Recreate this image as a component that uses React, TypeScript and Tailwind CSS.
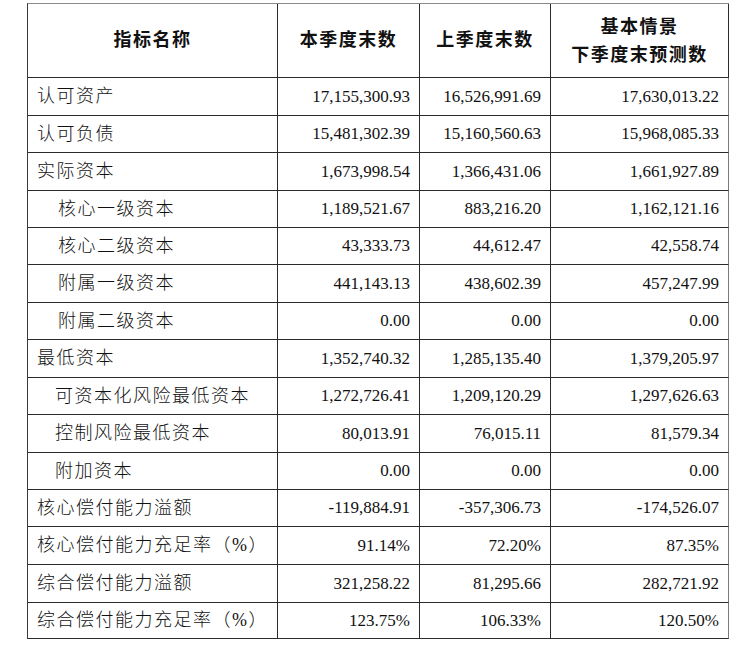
const ROWS: { label: string; indent?: string; cur: string; prev: string; next: string; h: string }[] = [
  { label: "认可资产", cur: "17,155,300.93", prev: "16,526,991.69", next: "17,630,013.22", h: "h-[38px]" },
  { label: "认可负债", cur: "15,481,302.39", prev: "15,160,560.63", next: "15,968,085.33", h: "h-[37px]" },
  { label: "实际资本", cur: "1,673,998.54", prev: "1,366,431.06", next: "1,661,927.89", h: "h-[38px]" },
  { label: "核心一级资本", indent: "pl-[30px]", cur: "1,189,521.67", prev: "883,216.20", next: "1,162,121.16", h: "h-[37px]" },
  { label: "核心二级资本", indent: "pl-[30px]", cur: "43,333.73", prev: "44,612.47", next: "42,558.74", h: "h-[37px]" },
  { label: "附属一级资本", indent: "pl-[30px]", cur: "441,143.13", prev: "438,602.39", next: "457,247.99", h: "h-[38px]" },
  { label: "附属二级资本", indent: "pl-[30px]", cur: "0.00", prev: "0.00", next: "0.00", h: "h-[37px]" },
  { label: "最低资本", cur: "1,352,740.32", prev: "1,285,135.40", next: "1,379,205.97", h: "h-[38px]" },
  { label: "可资本化风险最低资本", indent: "pl-[27px]", cur: "1,272,726.41", prev: "1,209,120.29", next: "1,297,626.63", h: "h-[37px]" },
  { label: "控制风险最低资本", indent: "pl-[27px]", cur: "80,013.91", prev: "76,015.11", next: "81,579.34", h: "h-[38px]" },
  { label: "附加资本", indent: "pl-[27px]", cur: "0.00", prev: "0.00", next: "0.00", h: "h-[37px]" },
  { label: "核心偿付能力溢额", cur: "-119,884.91", prev: "-357,306.73", next: "-174,526.07", h: "h-[37px]" },
  { label: "核心偿付能力充足率（%）", cur: "91.14%", prev: "72.20%", next: "87.35%", h: "h-[38px]" },
  { label: "综合偿付能力溢额", cur: "321,258.22", prev: "81,295.66", next: "282,721.92", h: "h-[38px]" },
  { label: "综合偿付能力充足率（%）", cur: "123.75%", prev: "106.33%", next: "120.50%", h: "h-[36px]" },
];

const COLS = "grid grid-cols-[250px_142px_131px_178px]";
const CELL = "border-r border-b border-[#2b2b2b] flex items-center";
const NUM = `${CELL} justify-end pr-[9px] text-[17px] font-['Liberation_Serif',serif]`;

export default function App() {
  return (
    <div className="h-[654px] w-[754px] bg-white pl-[27px] pt-[3px] text-[#111]">
      <div className="w-[702px] border-l border-t border-l-[#3a3a3a] border-t-[#8a8a8a] font-['Liberation_Serif','Noto_Sans_CJK_SC',serif]">
        <div className={`${COLS} h-[74px] text-[18px] font-bold tracking-[1.5px]`}>
          <div className={`${CELL} justify-center`}>指标名称</div>
          <div className={`${CELL} justify-center`}>本季度末数</div>
          <div className={`${CELL} justify-center`}>上季度末数</div>
          <div className={`${CELL} flex-col justify-center text-center leading-[28px]`}>
            <span>基本情景</span>
            <span>下季度末预测数</span>
          </div>
        </div>
        {ROWS.map((r) => (
          <div key={r.label} className={`${COLS} ${r.h}`}>
            <div className={`${CELL} ${r.indent ?? "pl-[9px]"} text-[18px] font-light tracking-[1.5px]`}>
              {r.label}
            </div>
            <div className={NUM}>{r.cur}</div>
            <div className={NUM}>{r.prev}</div>
            <div className={`${NUM} border-r-[#7a7a7a]`}>{r.next}</div>
          </div>
        ))}
      </div>
    </div>
  );
}
